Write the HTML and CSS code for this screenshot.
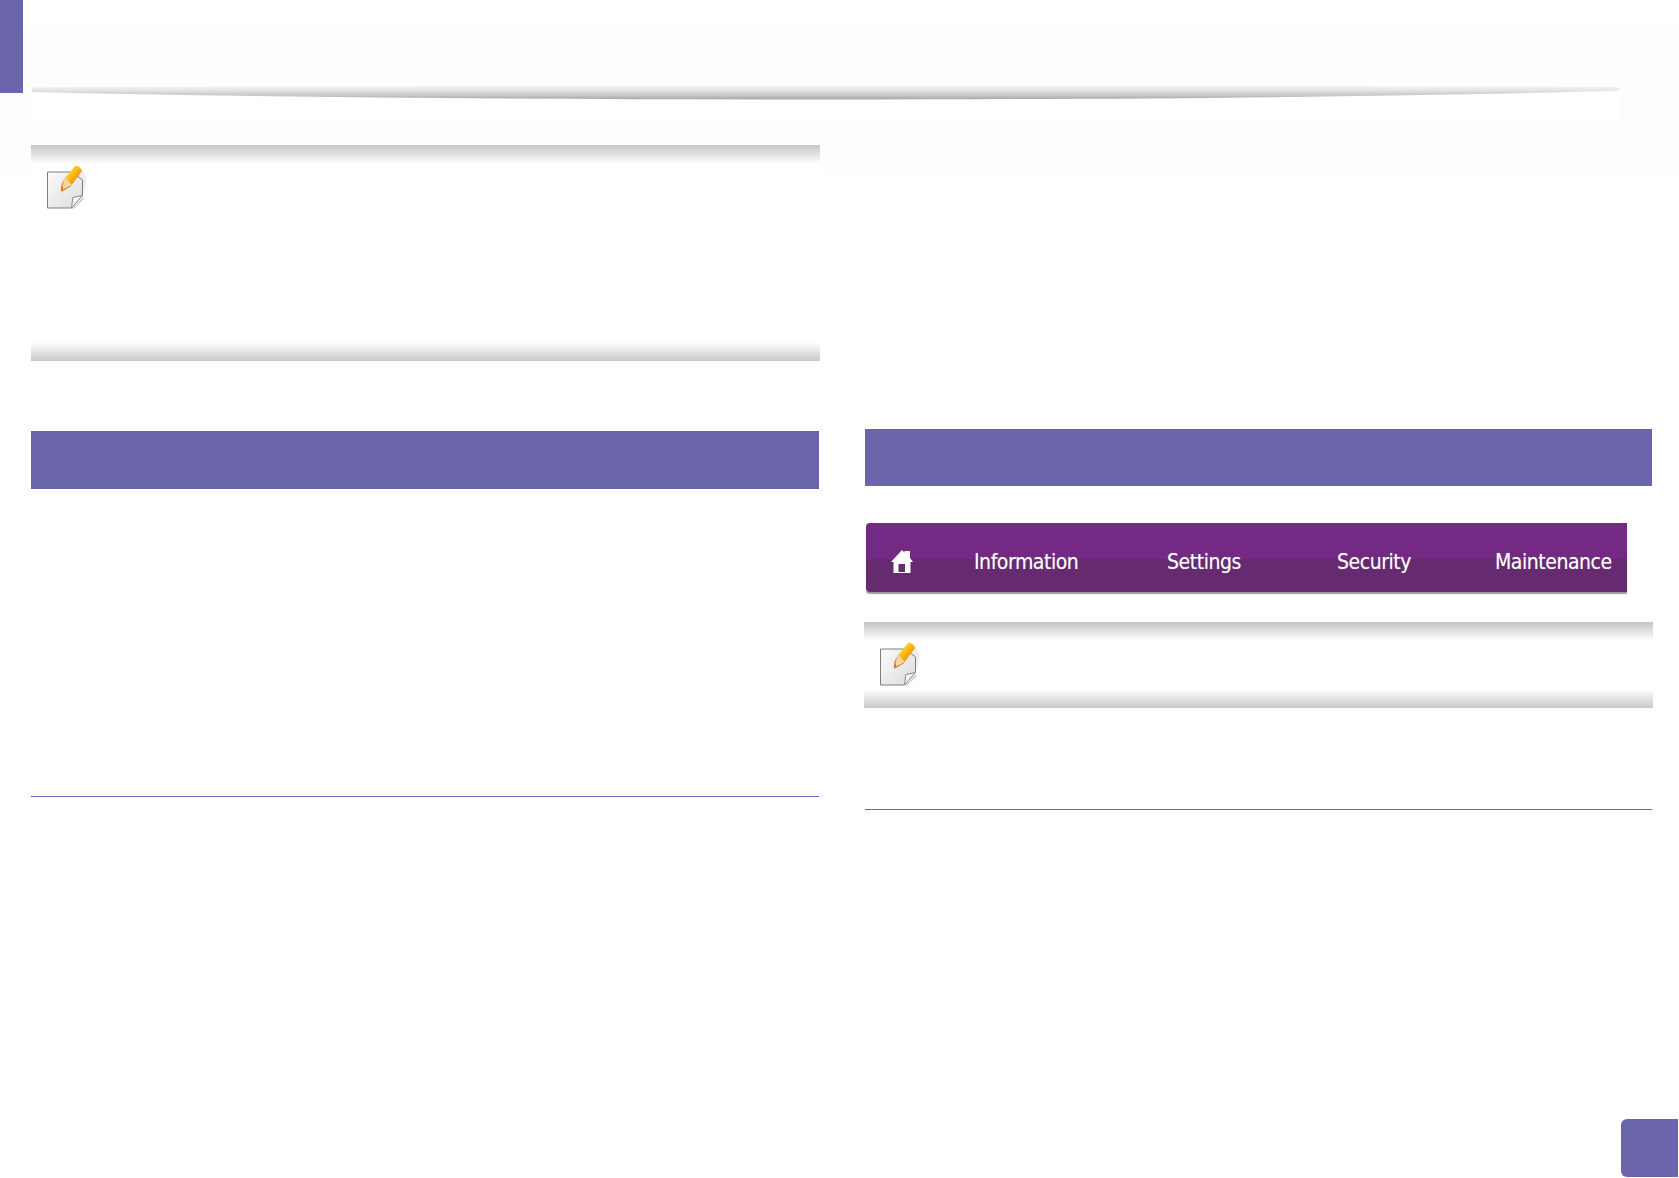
FILE: index.html
```html
<!DOCTYPE html>
<html lang="en">
<head>
<meta charset="utf-8">
<title>Manual page</title>
<link rel="stylesheet" href="styles.css">
</head>
<body>
<svg class="defs" width="0" height="0" aria-hidden="true">
  <defs>
    <linearGradient id="paper" x1="0" y1="0" x2="1" y2="1">
      <stop offset="0" stop-color="#fbfbfb"/>
      <stop offset="1" stop-color="#dcdcdc"/>
    </linearGradient>
    <linearGradient id="pencil" gradientUnits="userSpaceOnUse" x1="24" y1="6" x2="35" y2="15">
      <stop offset="0" stop-color="#ffdc3a"/>
      <stop offset="0.5" stop-color="#fcb714"/>
      <stop offset="1" stop-color="#ee8a0a"/>
    </linearGradient>
    <linearGradient id="swoosh" gradientUnits="userSpaceOnUse" x1="0" y1="0" x2="0" y2="14.5">
      <stop offset="0" stop-color="#f6f6f4"/>
      <stop offset="0.35" stop-color="#e6e6e5"/>
      <stop offset="0.7" stop-color="#c9c7c7"/>
      <stop offset="1" stop-color="#aaa6a6"/>
    </linearGradient>
    <symbol id="note-icon" viewBox="0 0 45 45">
      <ellipse cx="34" cy="17" rx="8.5" ry="12" fill="#eeeeee"/>
      <path d="M5 45H28L39.5 32.5V35.5L29 45.5H5Z" fill="#cfcfcf"/>
      <path d="M3.5 8H28L38.5 16V31L27.5 44H3.5Z" fill="url(#paper)" stroke="#7e7e7e" stroke-width="1"/>
      <path d="M38.5 31.5L28.8 33.5L27.5 44Z" fill="#f6f6f6" stroke="#8a8a8a" stroke-width="1" stroke-linejoin="round"/>
      <path d="M21 14L31 2C33 1 36.5 3 38 7L27.7 21Z" fill="url(#pencil)"/>
      <path d="M21 14L27.7 21L16.7 26.7Z" fill="#f6d3a2"/>
      <path d="M21 14L17.6 20.5L16.7 26.7L19 25.5L18.5 21Z" fill="#d46f16"/>
      <path d="M16.7 26.7L27.7 21L26.5 22.5L18 27.5Z" fill="#d8781c"/>
    </symbol>
  </defs>
</svg>

<div class="page">
  <header class="top">
    <div class="tab"></div>
    <div class="head-main">
      <svg class="swoosh" viewBox="0 0 1588 40" width="1588" height="40" aria-hidden="true">
        <rect x="0" y="8" width="1588" height="32" fill="#ffffff"/>
        <path d="M0 2.5C100 0.8 1400 0 1586 2L1588 5.5C1400 11.5 1100 14.5 794 14.5C520 14.5 240 12.5 0 7Z" fill="url(#swoosh)"/>
      </svg>
    </div>
  </header>

  <main class="columns">
    <section class="col">
      <div class="note note-tall">
        <svg class="note-svg" width="45" height="45" aria-hidden="true"><use href="#note-icon"/></svg>
      </div>
      <div class="bar bar-left"></div>
      <div class="rule rule-left"></div>
    </section>

    <section class="col col-right">
      <div class="bar bar-right"></div>
      <nav class="menu">
        <svg class="home" viewBox="0 0 22 23" width="22" height="23" aria-hidden="true">
          <path fill-rule="evenodd" d="M11 0L13.5 2.5V1H19V8L22 12H19.5V23H2.5V12H0ZM7.5 14V22H14V14Z" fill="#ffffff"/>
        </svg>
        <span class="menu-item">Information</span>
        <span class="menu-item">Settings</span>
        <span class="menu-item">Security</span>
        <span class="menu-item">Maintenance</span>
      </nav>
      <div class="note note-short">
        <svg class="note-svg" width="45" height="45" aria-hidden="true"><use href="#note-icon"/></svg>
      </div>
      <div class="rule rule-right"></div>
    </section>
  </main>

  <div class="page-tab"></div>
</div>
</body>
</html>
```
FILE: styles.css
```css
html, body {
  margin: 0;
  padding: 0;
  background: #ffffff;
}

.defs {
  position: absolute;
}

.page {
  position: relative;
  width: 1679px;
  height: 1178px;
  overflow: hidden;
  background: linear-gradient(#fdfdfb, #fdfdfb) 0 29px / 100% 143px no-repeat, #ffffff;
  font-family: "DejaVu Sans", "Liberation Sans", Arial, sans-serif;
}

.top {
  display: flex;
  align-items: flex-start;
  height: 145px;
}

.tab {
  width: 23px;
  height: 93px;
  background: #6b65ac;
}

.head-main {
  margin-left: 9px;
  padding-top: 85px;
}

.swoosh {
  display: block;
}

.columns {
  display: grid;
  grid-template-columns: 789px 789px;
  column-gap: 44px;
  padding-left: 31px;
}

.col-right {
  padding-top: 284px;
}

.note {
  box-sizing: border-box;
  padding: 19px 0 0 13px;
  background:
    linear-gradient(#c6c6c6, #ffffff) 0 0 / 100% 19px no-repeat,
    linear-gradient(#ffffff, #c9c9c9) 0 100% / 100% 19px no-repeat,
    #ffffff;
}

.note-svg {
  display: block;
}

.note-tall {
  height: 216px;
}

.note-short {
  height: 86px;
  margin-top: 30px;
}

.bar {
  height: 57px;
  background: #6b65ac;
}

.bar-left {
  width: 788px;
  height: 58px;
  margin-top: 70px;
}

.bar-right {
  margin: 0 1px;
}

.rule {
  height: 1px;
  background: #6f66b5;
}

.rule-left {
  width: 788px;
  margin-top: 307px;
}

.rule-right {
  margin: 101px 1px 0;
}

.menu {
  display: grid;
  grid-template-columns: 83px 193px 170px 158px 1fr;
  align-items: center;
  box-sizing: border-box;
  width: 761px;
  height: 69px;
  margin: 37px 0 0 2px;
  padding: 8px 0 0 25px;
  border-radius: 4px 0 0 4px;
  background: linear-gradient(#742a84 0, #742a84 36px, #652a70 36px, #652a70 100%);
  box-shadow: 0 2px 1px #9a9a9a;
}

.home {
  display: block;
}

.menu-item {
  color: #ffffff;
  font-size: 21px;
  font-stretch: condensed;
  line-height: 26px;
  letter-spacing: -0.45px;
  white-space: nowrap;
  text-shadow: 0 0 1px rgba(255, 255, 255, 0.35);
}

.page-tab {
  position: absolute;
  right: 1px;
  bottom: 1px;
  width: 57px;
  height: 58px;
  border-radius: 6px 0 0 6px;
  background: #6b65ac;
}
```
